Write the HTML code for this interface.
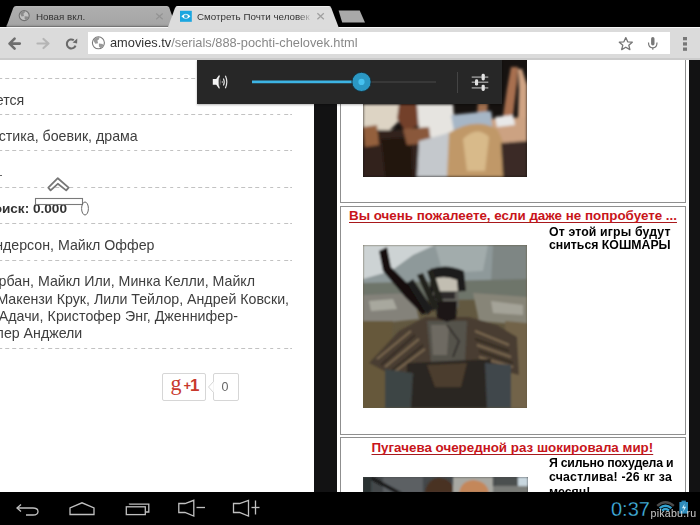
<!DOCTYPE html>
<html><head><meta charset="utf-8">
<style>
*{margin:0;padding:0;box-sizing:border-box}
html,body{width:700px;height:525px;overflow:hidden;background:#fff;font-family:"Liberation Sans",sans-serif}
.a{position:absolute}
.t,.lt,.rt{filter:grayscale(1)}
.t{position:absolute;white-space:nowrap;line-height:1}
.dash{position:absolute;left:0;width:292px;height:1px;background:repeating-linear-gradient(90deg,#c2c2c2 0 3.6px,transparent 3.6px 7.15px);background-position:-1.8px 0}
.lt{position:absolute;white-space:nowrap;font-size:14.2px;color:#3e3e3e;line-height:1}
.rt{position:absolute;white-space:nowrap;font-weight:bold;color:#000;line-height:1;font-size:12.3px}
.ttl{position:absolute;white-space:nowrap;font-weight:bold;color:#c8141a;line-height:1;font-size:13.37px;text-decoration:underline;text-decoration-thickness:1.2px;text-underline-offset:1.6px;text-decoration-skip-ink:none;text-decoration-color:#a8181c}
</style></head>
<body>
<!-- ============ PAGE CONTENT ============ -->
<!-- black separators -->
<div class="a" style="left:314px;top:59px;width:23px;height:433px;background:#121213"></div>
<div class="a" style="left:688.6px;top:59px;width:12px;height:433px;background:#121213"></div>

<!-- left column -->
<div class="dash" style="top:78px"></div>
<div class="dash" style="top:114px"></div>
<div class="dash" style="top:150px"></div>
<div class="dash" style="top:187px"></div>
<div class="dash" style="top:223px"></div>
<div class="dash" style="top:260px"></div>
<div class="dash" style="top:348px"></div>

<div class="lt" style="right:675.7px;top:92.8px">ется</div>
<div class="lt" style="right:562.3px;top:129.4px">стика, боевик, драма</div>
<div class="a" style="left:0;top:174.5px;width:1.6px;height:1.6px;background:#666"></div>
<div class="lt" style="right:633px;top:201.7px;font-weight:bold;font-size:13.6px;color:#333">оиск: 0.000</div>
<div class="lt" style="right:545.5px;top:237.8px">ндерсон, Майкл Оффер</div>
<div class="lt" style="right:445px;top:273.5px">рбан, Майкл Или, Минка Келли, Майкл</div>
<div class="lt" style="right:411px;top:291.8px">Макензи Крук, Лили Тейлор, Андрей Ковски,</div>
<div class="lt" style="right:462px;top:309.1px;letter-spacing:0.06px">Адачи, Кристофер Энг, Дженнифер-</div>
<div class="lt" style="right:617.7px;top:326.2px">лер Анджели</div>

<!-- rating widget outlines -->
<svg class="a" style="left:0;top:160px" width="120" height="70">
  <path d="M48.3,27.6 L57.8,18.2 L68.6,27.6 L66.2,30.4 L57.8,23.8 L50.6,30.4 Z" fill="#fff" stroke="#777" stroke-width="1.8" stroke-linejoin="round"/>
  <rect x="35.5" y="38.5" width="47" height="6" fill="none" stroke="#7a7a7a" stroke-width="1.1"/>
  <ellipse cx="85" cy="48.5" rx="3.4" ry="6.5" fill="none" stroke="#6a6a6a" stroke-width="1"/>
</svg>

<!-- g+1 -->
<div class="a" style="left:162px;top:373px;width:44px;height:28px;border:1px solid #d6d6d6;border-radius:2px;background:#fff"></div>
<div class="a" style="left:170.5px;top:372px;line-height:1;font-family:'Liberation Serif',serif;font-size:22px;color:#c8392d">g</div>
<div class="a" style="left:183.5px;top:379px;line-height:1;font-size:13px;font-weight:bold;color:#c8392d">+</div><div class="a" style="left:190px;top:377px;line-height:1;font-size:17px;font-weight:bold;color:#c8392d">1</div>
<div class="a" style="left:213px;top:373px;width:26px;height:28px;border:1px solid #d6d6d6;border-radius:2px;background:#fff"></div>
<svg class="a" style="left:207px;top:381px" width="8" height="12"><path d="M6.5,0.5 L1.5,6 L6.5,11.5" fill="#fff" stroke="#d6d6d6" stroke-width="1"/><rect x="6.5" y="1" width="2" height="10" fill="#fff"/></svg>
<div class="t" style="left:221.5px;top:380.5px;font-size:12.5px;color:#666">0</div>

<!-- right boxes -->
<div class="a" style="left:340px;top:40px;width:345.8px;height:162.5px;border:1.3px solid #8f8f8f;border-top:none"></div>
<div class="a" style="left:340px;top:205.5px;width:345.8px;height:229px;border:1.3px solid #8f8f8f"></div>
<div class="a" style="left:340px;top:437px;width:345.8px;height:80px;border:1.3px solid #8f8f8f"></div>

<!-- images (placeholder) -->
<svg id="img1" class="a" style="left:363px;top:59px" width="164" height="118" viewBox="0 0 164 118">
  <defs><filter id="bl1" x="-10%" y="-10%" width="120%" height="120%"><feGaussianBlur stdDeviation="1.5"/></filter></defs>
  <rect width="164" height="118" fill="#161210"/>
  <g filter="url(#bl1)">
    <path d="M148,8 L155,8 L154,24 L150,57 L140,57 L144,30 Z" fill="#a87050"/>
    <path d="M155,10 L159,10 L164,26 L164,64 L155,60 L156,30 Z" fill="#d0a484"/>
    <path d="M0,45 L40,45 L38,60 L26,72 L0,70 Z" fill="#ddd4c4"/>
    <path d="M36,45 L56,45 L57,66 L42,72 L34,60 Z" fill="#73402c"/>
    <path d="M54,45 L90,45 L92,72 L70,80 L56,72 Z" fill="#e6e4e0"/>
    <path d="M115,42 L125,42 L124,57 L114,57 Z" fill="#a07050"/>
    <path d="M88,56 L128,52 L132,74 L92,78 Z" fill="#a6b6c6"/>
    <path d="M128,60 L164,58 L164,84 L132,84 Z" fill="#cca282"/>
    <path d="M132,58 L150,56 L152,66 L134,68 Z" fill="#e8e8e8"/>
    <path d="M0,72 L58,70 L60,118 L0,118 Z" fill="#33221a"/>
    <path d="M18,80 L48,78 L50,118 L22,118 Z" fill="#24160e"/>
    <path d="M0,68 L14,66 L16,86 L2,88 Z" fill="#94603e"/>
    <path d="M40,70 L66,68 L68,84 L44,86 Z" fill="#8a583a"/>
    <path d="M56,82 L86,74 L92,118 L54,118 Z" fill="#c4c8cc"/>
    <path d="M86,74 Q112,58 134,70 Q146,90 140,118 L84,118 Z" fill="#c09868"/>
    <path d="M100,80 Q114,66 126,78 L122,112 L104,112 Z" fill="#d8ba8a"/>
    <path d="M138,84 L164,82 L164,118 L140,118 Z" fill="#3a2c26"/>
  </g>
</svg>
<svg id="img2" class="a" style="left:363px;top:245px" width="164" height="163" viewBox="0 0 164 163">
  <defs><filter id="bl2" x="-10%" y="-10%" width="120%" height="120%"><feGaussianBlur stdDeviation="1.1"/></filter></defs>
  <rect width="164" height="163" fill="#625840"/>
  <g filter="url(#bl2)">
    <rect x="0" y="0" width="164" height="40" fill="#cdd3d4"/>
    <path d="M0,34 L28,26 L50,10 L72,0 L164,0 L164,44 L0,46 Z" fill="#8e999a"/>
    <path d="M72,0 L125,0 L120,26 L80,28 Z" fill="#a2acac"/>
    <path d="M130,0 L164,0 L164,40 L128,38 Z" fill="#7e8684"/>
    <path d="M0,38 L164,34 L164,54 L0,56 Z" fill="#6e746a"/>
    <path d="M0,50 L50,48 L56,74 L0,80 Z" fill="#84827a"/>
    <path d="M6,56 L30,54 L34,64 L8,66 Z" fill="#a8a89e"/>
    <path d="M110,48 L164,52 L164,80 L116,76 Z" fill="#878578"/>
    <path d="M128,56 L160,60 L160,70 L130,68 Z" fill="#a4a398"/>
    <path d="M0,76 L30,76 L22,163 L0,163 Z" fill="#66583a"/>
    <path d="M142,76 L164,78 L164,163 L146,163 Z" fill="#72644a"/>
    <path d="M6,118 L36,86 L62,72 L106,72 L134,80 L154,92 L156,130 L124,122 L66,122 L40,136 Z" fill="#4a3e32"/>
    <g stroke="#7a6850" stroke-width="2" fill="none">
      <path d="M14,114 L48,86"/><path d="M22,122 L56,94"/><path d="M30,128 L62,104"/>
      <path d="M112,86 L146,100"/><path d="M114,100 L148,112"/><path d="M116,112 L150,122"/>
    </g>
    <g stroke="#2c241e" stroke-width="1.6" fill="none">
      <path d="M18,120 L52,90"/><path d="M28,126 L60,100"/>
      <path d="M112,94 L146,106"/><path d="M116,106 L150,118"/>
    </g>
    <path d="M64,76 L104,76 L102,116 L68,118 Z" fill="#55524c"/>
    <path d="M68,80 L86,80 L84,110 L70,110 Z" fill="#6e6a62"/>
    <path d="M84,80 L96,96 L90,112" fill="none" stroke="#2a2622" stroke-width="1.5"/>
    <path d="M44,118 L128,114 L128,163 L42,163 Z" fill="#2c2620"/>
    <path d="M64,120 L104,118 L98,142 L72,142 Z" fill="#4c3c2e"/>
    <path d="M22,124 L50,128 L48,163 L22,163 Z" fill="#3e4444"/>
    <path d="M122,118 L148,120 L148,163 L124,163 Z" fill="#40464c"/>
    <path d="M67,24 Q84,18 101,26 L103,46 L67,48 Z" fill="#1e1c1a"/>
    <path d="M70,34 Q82,30 94,35 L95,47 L71,47 Z" fill="#c2beb2"/>
    <path d="M70,46 L95,46 L96,62 L84,72 L71,62 Z" fill="#64625c"/>
    <path d="M71,47 L92,47 L92,54 L71,54 Z" fill="#2e2c2a"/>
    <path d="M73,56 L94,56 L93,74 L84,77 L74,73 Z" fill="#1a1816"/>
    <path d="M16,6 L24,2 L28,22 L52,46 L66,64 L60,70 L42,52 L20,26 Z" fill="#121110"/>
    <path d="M44,38 L50,34 L70,64 L64,70 Z" fill="#1e1c1a"/>
    <path d="M54,30 L60,28 L76,62 L70,66 Z" fill="#22201c"/>
    <path d="M64,26 L70,24 L80,56 L74,58 Z" fill="#22201c"/>
  </g>
</svg>
<svg id="img3" class="a" style="left:363px;top:477px" width="165" height="16" viewBox="0 0 165 16">
  <defs><filter id="bl3" x="-10%" y="-30%" width="120%" height="160%"><feGaussianBlur stdDeviation="0.9"/></filter></defs>
  <rect width="165" height="16" fill="#44484a"/>
  <g filter="url(#bl3)">
    <rect x="20" y="0" width="40" height="16" fill="#5c6064"/>
    <path d="M5,1 L10,0 L40,16 L32,16 Z" fill="#161616"/>
    <rect x="0" y="0" width="8" height="16" fill="#2c3030"/>
    <path d="M62,16 Q64,2 76,1 Q90,2 92,16 Z" fill="#4a3022"/>
    <rect x="90" y="0" width="40" height="16" fill="#a8a8a2"/>
    <path d="M96,16 Q98,4 110,3 Q124,4 126,16 Z" fill="#c4875a"/>
    <rect x="132" y="0" width="28" height="9" fill="#4c5050"/>
    <rect x="155" y="0" width="10" height="16" fill="#c8d6de"/>
    <rect x="130" y="9" width="35" height="7" fill="#7a7c78"/>
  </g>
</svg>

<div class="ttl" style="left:349px;top:209.2px">Вы очень пожалеете, если даже не попробуете ...</div>
<div class="rt" style="left:549px;top:225.6px;letter-spacing:0.14px">От этой игры будут</div>
<div class="rt" style="left:549px;top:239.4px">сниться КОШМАРЫ</div>
<div class="ttl" style="left:371.5px;top:440.6px">Пугачева очередной раз шокировала мир!</div>
<div class="rt" style="left:549px;top:456.5px;letter-spacing:-0.24px">Я сильно похудела и</div>
<div class="rt" style="left:549px;top:471.1px;letter-spacing:0.2px">счастлива! -26 кг за</div>
<div class="rt" style="left:549px;top:485.6px">месяц!</div>

<!-- volume panel -->
<div class="a" style="left:197px;top:60px;width:304.5px;height:43.8px;background:#272727;box-shadow:0 1px 2px rgba(0,0,0,.3)"></div>
<svg class="a" style="left:197px;top:60px" width="305" height="44">
  <!-- speaker -->
  <path d="M15.8,19 L19.2,19 L22.3,14.8 Q24.4,21.9 22.3,29 L19.2,24.7 L15.8,24.7 Z" fill="#f4f4f4"/>
  <ellipse cx="22.4" cy="21.9" rx="0.8" ry="5" fill="#3a3a3a"/>
  <circle cx="25.4" cy="22" r="0.8" fill="#cfcfcf"/>
  <path d="M26.4,18.4 Q28.2,22 26.4,25.6" fill="none" stroke="#e6e6e6" stroke-width="1.1"/>
  <path d="M28.4,15.8 Q31.2,22 28.4,28.2" fill="none" stroke="#e6e6e6" stroke-width="1.2"/>
  <!-- track -->
  <line x1="165" y1="22" x2="239" y2="22" stroke="#4a4a4a" stroke-width="1"/>
  <line x1="55" y1="21.9" x2="164" y2="21.9" stroke="#3db4e4" stroke-width="2.7"/>
  <circle cx="164.5" cy="21.9" r="9.6" fill="#2b98c4" stroke="#13262e" stroke-width="0.8"/>
  <circle cx="164.5" cy="21.9" r="3.1" fill="#46c2f0"/>
  <!-- separator -->
  <line x1="260.5" y1="12" x2="260.5" y2="33" stroke="#444" stroke-width="1"/>
  <!-- eq icon -->
  <g stroke="#a6a6a6" stroke-width="1.3">
    <line x1="274.7" y1="17.1" x2="291.3" y2="17.1"/>
    <line x1="274.7" y1="22.2" x2="291.3" y2="22.2"/>
    <line x1="274.7" y1="27.9" x2="291.3" y2="27.9"/>
  </g>
  <g fill="#e2e2e2">
    <rect x="284.6" y="13.8" width="3.2" height="6.6" rx="1.4"/>
    <rect x="278" y="19.2" width="3.1" height="6.4" rx="1.4"/>
    <rect x="284.6" y="24.7" width="3.2" height="6.2" rx="1.4"/>
  </g>
</svg>

<!-- ============ BROWSER CHROME ============ -->
<div class="a" style="left:0;top:0;width:700px;height:27px;background:#000"></div>
<svg class="a" style="left:0;top:0" width="700" height="27">
  <defs><linearGradient id="tg" x1="0" y1="0" x2="0" y2="1"><stop offset="0" stop-color="#b6b6b6"/><stop offset="0.12" stop-color="#adadad"/><stop offset="1" stop-color="#a5a5a5"/></linearGradient></defs><path d="M6.5,26.5 L13.2,8 Q14,6 16,6 L167,6 Q168.5,6 169.2,7.5 L176,26.5 Z" fill="url(#tg)"/>
  <path d="M6.9,24.8 L176,24.8 L176,26.6 L6.5,26.6 Z" fill="#989898"/>
  <path d="M168,27 L175,8 Q175.8,6 178,6 L328.5,6 Q330.5,6 331.3,8 L338.5,27 Z" fill="#dcdcdc"/><path d="M175.6,6.8 Q176.4,6 178,6 L328.5,6 Q330.3,6 330.9,6.8 Z" fill="#f2f2f2"/>
  <path d="M338.6,10.5 L359.7,10.5 L365,22.5 L342.2,22.5 Z" fill="#a9a9a9"/>
  <!-- globe tab -->
  <g transform="translate(24.2,15.6)">
    <circle r="5" fill="#c2c2c2" stroke="#707070" stroke-width="1.1"/>
    <path d="M-4.2,-2 Q-2.8,-4.6 0.8,-4.8 L0.6,-3 L-0.8,-1.8 L-0.2,0.4 L-2.6,0.8 Z M0.4,0.6 L3.6,0.9 L4,2.6 L2,4.6 L0.4,3.2 Z" fill="#8a8a8a"/>
  </g>
  <!-- x inactive -->
  <path d="M156.2,13.5 L162.7,19.2 M162.7,13.5 L156.2,19.2" stroke="#939393" stroke-width="1.2"/>
  <!-- favicon -->
  <rect x="180" y="10.8" width="11.8" height="11" fill="#1ba6e0"/>
  <path d="M181.4,16.3 Q185.9,11.2 190.4,16.3 Q185.9,21.4 181.4,16.3 Z" fill="#fff"/>
  <circle cx="185.9" cy="16.3" r="1.9" fill="#3aa9d6"/>
  <!-- x active -->
  <path d="M317.4,13.3 L323.8,19.2 M323.8,13.3 L317.4,19.2" stroke="#a0a0a0" stroke-width="1.3"/>
</svg>
<div class="t" style="left:36px;top:12px;font-size:9.8px;color:#333">Новая вкл.</div>
<div class="t" style="left:197px;top:12.1px;font-size:9.8px;color:#333;width:115px;overflow:hidden;-webkit-mask-image:linear-gradient(90deg,#000 88%,transparent)">Смотреть Почти человек</div>

<div class="a" style="left:0;top:27px;width:700px;height:32.5px;background:#dbdbdb;border-top:1px solid #f6f6f6;border-bottom:2.3px solid #cbcbcb"></div>
<div class="a" style="left:167.6px;top:26.5px;width:171px;height:2.2px;background:#dcdcdc"></div>
<div class="a" style="left:87.5px;top:32px;width:582px;height:22px;background:#fff"></div>
<svg class="a" style="left:0;top:27px" width="700" height="32">
  <!-- back -->
  <path d="M19.8,16.6 L10,16.6 M14.6,11.6 L9.5,16.6 L14.6,21.6" fill="none" stroke="#6e6e6e" stroke-width="2.6" stroke-linecap="round" stroke-linejoin="round"/>
  <!-- forward -->
  <path d="M37.5,16.5 L48,16.5 M43.5,12 L48.5,16.5 L43.5,21" fill="none" stroke="#b5b5b5" stroke-width="2.2" stroke-linecap="round" stroke-linejoin="round"/>
  <!-- reload -->
  <path d="M75.5,18.6 A4.5,4.5 0 1 1 73.8,13.2" fill="none" stroke="#6a6a6a" stroke-width="2.1"/>
  <path d="M72.6,15.6 L77.3,11.6 L77.1,16.4 Z" fill="#6a6a6a"/>
  <!-- globe url -->
  <g transform="translate(98.4,15.8)">
    <circle r="6" fill="#fff" stroke="#7a7a7a" stroke-width="1.1"/>
    <path d="M-5,-2.4 Q-3.4,-5.5 1,-5.7 L0.7,-3.6 L-1,-2.2 L-0.3,0.5 L-3.1,1 Z M0.5,0.7 L4.3,1.1 L4.8,3.1 L2.4,5.5 L0.5,3.8 Z" fill="#9a9a9a"/>
  </g>
  <!-- star -->
  <path d="M625.8,10.6 L627.7,14.8 L632.3,15.2 L628.8,18.2 L629.9,22.6 L625.8,20.2 L621.7,22.6 L622.8,18.2 L619.3,15.2 L623.9,14.8 Z" fill="none" stroke="#767676" stroke-width="1.3" stroke-linejoin="round"/>
  <!-- mic -->
  <rect x="651.1" y="10" width="3.4" height="8.5" rx="1.7" fill="#777"/>
  <path d="M648.5,15.5 Q648.5,20.8 652.8,20.8 Q657,20.8 657,15.5" fill="none" stroke="#777" stroke-width="1.2"/>
  <line x1="652.8" y1="20.8" x2="652.8" y2="22.8" stroke="#777" stroke-width="1.2"/>
  <!-- menu -->
  <rect x="683" y="10" width="4" height="3.3" fill="#777"/>
  <rect x="683" y="15.3" width="4" height="3.3" fill="#777"/>
  <rect x="683" y="20.5" width="4" height="3.3" fill="#777"/>
</svg>
<div class="t" style="left:110px;top:36.9px;font-size:12.8px;color:#333">amovies.tv<span style="color:#888">/serials/888-pochti-chelovek.html</span></div>

<!-- ============ NAV BAR ============ -->
<div class="a" style="left:0;top:492px;width:700px;height:33px;background:#000"></div>
<svg class="a" style="left:0;top:492px" width="700" height="33">
  <g fill="none" stroke="#c0c0c0" stroke-width="1.3">
    <!-- back -->
    <path d="M17,16 L33,16 Q38,16 38,19.5 Q38,23 33,23 L26,23"/>
    <path d="M21,12.5 L17,16 L21,19.5"/>
    <!-- home -->
    <path d="M70,22.5 L70,16 L82,10.8 L94,16 L94,22.5 Z"/>
    <!-- recents -->
    <rect x="126.3" y="14.8" width="19" height="7.8"/>
    <path d="M129.5,12.5 L129.5,12.2 L148.8,12.2 L148.8,20 L146,20"/>
    <!-- vol- -->
    <path d="M178.8,11.5 L185,11.5 L193.8,8.3 L193.8,24 L185,20.5 L178.8,20.5 Z"/>
    <line x1="196.5" y1="15.5" x2="205" y2="15.5"/>
    <!-- vol+ -->
    <path d="M233.5,11.5 L239.5,11.5 L248.5,8.3 L248.5,24 L239.5,20.5 L233.5,20.5 Z"/>
    <line x1="251.5" y1="15.5" x2="259.5" y2="15.5"/>
    <line x1="255.5" y1="8.5" x2="255.5" y2="22.5"/>
  </g>
  <!-- wifi -->
  <path d="M657.2,13.8 Q665.5,6.6 673.8,13.8" fill="none" stroke="#4c4c4c" stroke-width="2.4"/>
  <path d="M659.6,16.2 Q665.5,11.2 671.4,16.2" fill="none" stroke="#35a2d0" stroke-width="2.4"/>
  <path d="M662,18.6 Q665.5,15.6 669,18.6" fill="none" stroke="#35a2d0" stroke-width="2.4"/>
  <!-- battery -->
  <rect x="681.5" y="8.6" width="4.4" height="1.6" fill="#2a80ac"/>
  <rect x="679.4" y="10" width="8.6" height="11.6" fill="#2e8cbc"/>
  <path d="M684.6,11.4 L681.9,16.2 L684,16.2 L683,20.2 L686.1,14.8 L683.9,14.8 Z" fill="#c8eaf8"/>
</svg>
<div class="a" style="left:611px;top:498.6px;font-size:20px;line-height:1;white-space:nowrap;color:#45b8e6;-webkit-text-stroke:0.3px #000">0:37</div>
<div class="t" style="left:650.5px;top:507.6px;font-size:10.6px;letter-spacing:0.25px;color:rgba(235,235,235,.85)">pikabu.ru</div>
</body></html>
